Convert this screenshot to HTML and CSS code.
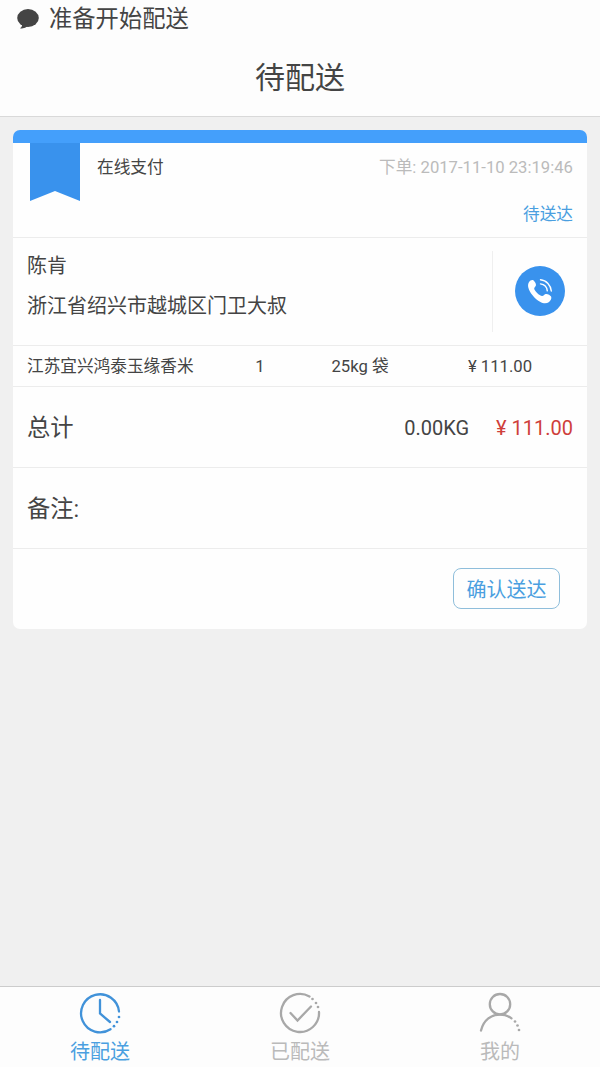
FILE: index.html
```
<!DOCTYPE html>
<html lang="zh-CN">
<head>
<meta charset="utf-8">
<title>待配送</title>
<link rel="stylesheet" href="styles.css">
</head>
<body>
<div class="app">
  <header class="header">
    <div class="status">
      <svg class="bubble" viewBox="0 0 22 20"><ellipse cx="11" cy="9" rx="10.8" ry="9"/><path d="M5 15Q5.500 18 3 19.300Q7.500 20.200 11 17Z"/></svg>
      <span>准备开始配送</span>
    </div>
    <h1 class="title">待配送</h1>
  </header>

  <main class="content">
    <article class="card">
      <section class="summary">
        <svg class="ribbon" viewBox="0 0 50 58"><path d="M0 0H50V58L25 48L0 58Z"/></svg>
        <span class="payment">在线支付</span>
        <div class="order">
          <span class="time">下单: 2017-11-10 23:19:46</span>
          <span class="state">待送达</span>
        </div>
      </section>
      <section class="customer">
        <div class="address">
          <span>陈肯</span>
          <span>浙江省绍兴市越城区门卫大叔</span>
        </div>
        <div class="call">
          <svg class="phone" viewBox="0 0 50 50">
            <circle class="disc" cx="25" cy="25" r="25"/>
            <path class="handset" d="M14.200 15.800C15 14.500 17.100 13.300 18.600 14.400C20.200 15.700 21.300 18 20.900 19.500C20.600 20.700 19.300 21.300 19.200 22.500C19.200 24.800 24.500 29.800 27.100 30.100C28.600 30.200 29 28.500 30.600 28C32.200 27.500 35.300 29 36.100 30.600C37 32.300 35.600 35 33.700 36.200C31.700 37.500 28.500 37.700 25 35.700C19.500 32.600 14.600 26.600 13.300 21.500C12.800 19.500 13.100 17.400 14.200 15.800Z"/>
            <path class="wave" d="M25.500 13.800C31.500 14.300 35.800 19.500 36.300 25M25.500 17.900C29.300 18.400 31.900 21.300 32.300 24.800"/>
          </svg>
        </div>
      </section>
      <section class="item">
        <span>江苏宜兴鸿泰玉缘香米</span>
        <span class="count">1</span>
        <span class="unit">25kg 袋</span>
        <span class="price">¥ 111.00</span>
      </section>
      <section class="total">
        <span class="label">总计</span>
        <span class="weight">0.00KG</span>
        <span class="sum">¥ 111.00</span>
      </section>
      <section class="remark"><span class="label">备注:</span></section>
      <section class="actions"><button class="confirm" type="button">确认送达</button></section>
    </article>
  </main>

  <nav class="tabs">
    <a class="tab active">
      <svg class="icon" viewBox="0 0 42 42"><path d="M40 19.500A19 19 0 1 0 31.500 37.200M21 8V21.500L31 30"/><g class="dots"><circle cx="40" cy="25" r="1.350"/><circle cx="38" cy="30" r="1.350"/><circle cx="35" cy="34.200" r="1.350"/></g></svg>
      <span>待配送</span>
    </a>
    <a class="tab">
      <svg class="icon" viewBox="0 0 42 42"><path d="M30.500 4.500A19 19 0 1 0 40 20M11.500 21L18.500 28.500L32 14.500"/><g class="dots"><circle cx="33.500" cy="7" r="1.350"/><circle cx="37" cy="11" r="1.350"/><circle cx="39" cy="15" r="1.350"/></g></svg>
      <span>已配送</span>
    </a>
    <a class="tab">
      <svg class="icon" viewBox="0 0 42 42"><circle cx="21" cy="12.200" r="10.200"/><path d="M2 38.500C4.500 28 12 22.600 21 22.600C25.500 22.600 29.500 24 32.500 26.300"/><g class="dots"><circle cx="36" cy="29.500" r="1.350"/><circle cx="38.500" cy="33.500" r="1.350"/><circle cx="40" cy="38" r="1.350"/></g></svg>
      <span>我的</span>
    </a>
  </nav>
</div>
</body>
</html>
```
FILE: styles.css
```
* { box-sizing: border-box; }

body {
  margin: 0;
  background: #f0f0f0;
  color: #444;
  font-family: Roboto, "Noto Sans CJK SC", sans-serif;
}

.app {
  display: flex;
  flex-direction: column;
  height: 1067px;
}

.header {
  height: 117px;
  background: #fdfdfd;
  border-bottom: 1px solid #d9d9d9;
}

.status {
  display: flex;
  align-items: center;
  gap: 10px;
  height: 37px;
  padding-left: 17px;
  font-size: 23.3px;
  line-height: 38px;
}

.bubble {
  width: 22px;
  height: 20px;
  fill: #444;
}

.title {
  margin: 0;
  font-size: 30px;
  font-weight: 400;
  line-height: 82px;
  text-align: center;
}

.content {
  flex: 1;
  padding: 13px;
}

.card {
  overflow: hidden;
  border-top: 13px solid #449ffb;
  border-radius: 7px;
  background: #fefefe;
}

.card > section + section { border-top: 1px solid #ececec; }

.summary {
  display: flex;
  height: 94px;
  padding: 0 14px 0 17px;
  font-size: 16.67px;
  line-height: 24px;
}

.ribbon {
  width: 50px;
  height: 58px;
  fill: #3992ed;
}

.payment { margin: 13px 0 0 17px; }

.order {
  display: flex;
  flex-direction: column;
  gap: 23px;
  margin: 13px 0 0 auto;
  text-align: right;
}

.time { color: #bbb; }

.state { color: #4a9fe0; }

.customer {
  display: flex;
  align-items: center;
  height: 108px;
  padding-left: 14px;
}

.address {
  display: flex;
  flex: 1;
  flex-direction: column;
  gap: 10px;
  padding-bottom: 11px;
  font-size: 20px;
  line-height: 30px;
}

.call {
  display: flex;
  align-items: center;
  width: 95px;
  height: 81px;
  padding: 0 0 2px 22px;
  border-left: 1px solid #efefef;
}

.phone {
  width: 50px;
  height: 50px;
}

.disc { fill: #3992ed; }

.handset { fill: #fff; }

.wave {
  fill: none;
  stroke: #fff;
  stroke-width: 1.4;
  stroke-linecap: round;
}

.item {
  display: grid;
  grid-template-columns: 193px 80px 120px 160px;
  height: 41px;
  padding-left: 14px;
  font-size: 16.67px;
  line-height: 42px;
}

.count, .unit, .price { text-align: center; }

.total, .remark {
  display: flex;
  height: 81px;
  padding: 0 14px 0 14px;
  font-size: 20px;
  line-height: 82px;
}

.label { font-size: 23.3px; }

.weight { margin-left: auto; }

.sum {
  margin-left: 27px;
  color: #cf3f3b;
}

.actions {
  display: flex;
  justify-content: flex-end;
  height: 81px;
  padding: 19px 27px 0 0;
}

.confirm {
  width: 107px;
  height: 41px;
  padding: 3px 0 0;
  border: 1px solid #8fbedb;
  border-radius: 8px;
  background: transparent;
  color: #4a9fe0;
  font: inherit;
  font-size: 20px;
  line-height: 36px;
}

.tabs {
  display: grid;
  grid-template-columns: repeat(3, 1fr);
  height: 81px;
  border-top: 1px solid #ccc;
  background: #fdfdfd;
}

.tab {
  display: flex;
  flex-direction: column;
  align-items: center;
  padding-top: 5px;
  color: #bababa;
  font-size: 20px;
  line-height: 30px;
}

.active { color: #4a9fe0; }

.icon {
  width: 42px;
  height: 42px;
  margin-bottom: 3px;
  fill: none;
  stroke: #a8a8a8;
  stroke-width: 2.3;
  stroke-linecap: round;
}

.active .icon { stroke: #4192d9; }

.dots {
  fill: #a8a8a8;
  stroke: none;
}

.active .dots { fill: #4192d9; }
```
